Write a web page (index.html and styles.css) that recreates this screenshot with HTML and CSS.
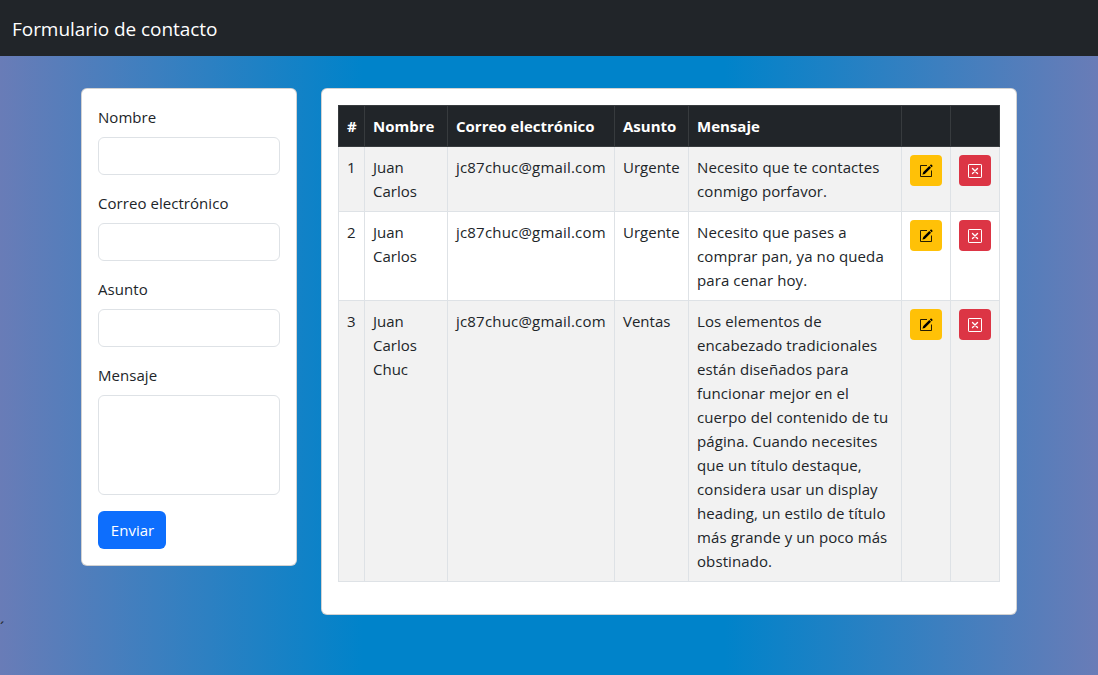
FILE: index.html
```html
<!DOCTYPE html>
<html lang="es">
<head>
<meta charset="utf-8">
<title>Formulario de contacto</title>
<link rel="stylesheet" href="styles.css">
</head>
<body>
<svg class="sprite" aria-hidden="true">
  <symbol id="pencil-square" viewBox="0 0 14 14">
    <path d="M8 1.500H1.500v11h11V6.500" fill="none" stroke="currentColor" stroke-opacity=".85"/>
    <path d="M13.564 1.698a.44.44 0 0 1 0 .618l-.912.914-1.750-1.750.912-.915a.44.44 0 0 1 .619 0zM12.033 3.847l-1.750-1.750-5.961 5.962a.44.44 0 0 0-.106.171l-.704 2.112a.22.22 0 0 0 .276.276l2.112-.704a.44.44 0 0 0 .171-.105z"/>
  </symbol>
  <symbol id="x-square" viewBox="0 0 14 14">
    <rect x=".5" y=".5" width="13" height="13" rx=".6" fill="none" stroke="currentColor"/>
    <path d="M4.500 4.500l5 5M9.500 4.500l-5 5" fill="none" stroke="currentColor" stroke-width="1.400" stroke-linecap="round"/>
  </symbol>
</svg>
<nav class="navbar"><span class="navbar-brand">Formulario de contacto</span></nav>
<main class="container">
  <form class="card form-card">
    <div class="field"><label for="nombre">Nombre</label><input id="nombre" class="control" type="text"></div>
    <div class="field"><label for="correo">Correo electrónico</label><input id="correo" class="control" type="text"></div>
    <div class="field"><label for="asunto">Asunto</label><input id="asunto" class="control" type="text"></div>
    <div class="field"><label for="mensaje">Mensaje</label><textarea id="mensaje" class="control area"></textarea></div>
    <button class="btn-primary" type="button">Enviar</button>
  </form>
  <section class="card table-card">
    <table class="table">
      <colgroup><col class="c-id"><col class="c-name"><col class="c-mail"><col class="c-subject"><col class="c-message"><col class="c-action"><col class="c-action"></colgroup>
      <thead><tr><th>#</th><th>Nombre</th><th>Correo electrónico</th><th>Asunto</th><th>Mensaje</th><th></th><th></th></tr></thead>
      <tbody>
        <tr><td>1</td><td>Juan<br>Carlos</td><td class="mail">jc87chuc@gmail.com</td><td>Urgente</td><td class="message">Necesito que te contactes<br>conmigo porfavor.</td>
          <td><button class="btn-sm edit" type="button" aria-label="Editar"><svg><use href="#pencil-square"/></svg></button></td>
          <td><button class="btn-sm remove" type="button" aria-label="Eliminar"><svg><use href="#x-square"/></svg></button></td></tr>
        <tr><td>2</td><td>Juan<br>Carlos</td><td class="mail">jc87chuc@gmail.com</td><td>Urgente</td><td class="message">Necesito que pases a<br>comprar pan, ya no queda<br>para cenar hoy.</td>
          <td><button class="btn-sm edit" type="button" aria-label="Editar"><svg><use href="#pencil-square"/></svg></button></td>
          <td><button class="btn-sm remove" type="button" aria-label="Eliminar"><svg><use href="#x-square"/></svg></button></td></tr>
        <tr><td>3</td><td>Juan<br>Carlos<br>Chuc</td><td class="mail">jc87chuc@gmail.com</td><td>Ventas</td><td class="message">Los elementos de<br>encabezado tradicionales<br>están diseñados para<br>funcionar mejor en el<br>cuerpo del contenido de tu<br>página. Cuando necesites<br>que un título destaque,<br>considera usar un display<br>heading, un estilo de título<br>más grande y un poco más<br>obstinado.</td>
          <td><button class="btn-sm edit" type="button" aria-label="Editar"><svg><use href="#pencil-square"/></svg></button></td>
          <td><button class="btn-sm remove" type="button" aria-label="Eliminar"><svg><use href="#x-square"/></svg></button></td></tr>
      </tbody>
    </table>
  </section>
</main>
<span class="stray">´</span>
</body>
</html>
```
FILE: styles.css
```css
*, *::before, *::after { box-sizing: border-box; }
body {
  margin: 0;
  min-height: 100vh;
  overflow: hidden;
  font: 15px/24px "Open Sans", "Noto Sans", sans-serif;
  color: #212529;
  background: linear-gradient(to right, #697cb7 0%, #0083ca 33%, #0083ca 66%, #697cb7 100%);
}
.sprite { display: none; }
.navbar { display: flex; align-items: center; height: 56px; padding: 0 12px; background: #212529; }
.navbar-brand { font-size: 19px; line-height: 30px; letter-spacing: -.05px; color: #fff; padding-top: 2px; }
.container { display: flex; align-items: flex-start; gap: 24px; width: 936px; margin: 32px auto 0; }
.card { background: #fff; border: 1px solid rgba(0, 0, 0, .175); border-radius: 6px; padding: 16px; }
.form-card { width: 216px; }
.table-card { width: 696px; }
.field { margin-bottom: 16px; }
label { display: block; margin-bottom: 8px; letter-spacing: .05px; }
.control { display: block; width: 100%; height: 38px; border: 1px solid #dee2e6; border-radius: 6px; background: #fff; font: inherit; padding: 6px 12px; }
.area { height: 100px; resize: none; }
.btn-primary { display: block; width: 68px; height: 38px; padding: 0 0 0 1px; border: 0; border-radius: 6px; background: #0d6efd; color: #fff; font: inherit; }
.table { width: 662px; margin-bottom: 16px; table-layout: fixed; border-collapse: collapse; }
.c-id { width: 26px; }
.c-name { width: 83px; }
.c-mail { width: 167px; }
.c-subject { width: 74px; }
.c-message { width: 213px; }
.c-action { width: 49px; }
th, td { padding: 8px; border: 1px solid #dee2e6; text-align: left; vertical-align: top; white-space: nowrap; }
th { background: #212529; border-color: #373b3e; color: #fff; font-weight: 700; }
tbody tr:nth-child(odd) td { background: #f2f2f2; }
.mail { letter-spacing: .19px; }
.message { letter-spacing: .1px; }
.btn-sm { display: flex; align-items: center; justify-content: center; width: 32px; height: 31px; padding: 1px 0 0; border: 0; border-radius: 4px; }
.btn-sm svg { width: 14px; height: 14px; fill: currentColor; }
.edit { background: #ffc107; color: #000; }
.remove { background: #dc3545; color: #fff; }
.stray { display: block; }
```
